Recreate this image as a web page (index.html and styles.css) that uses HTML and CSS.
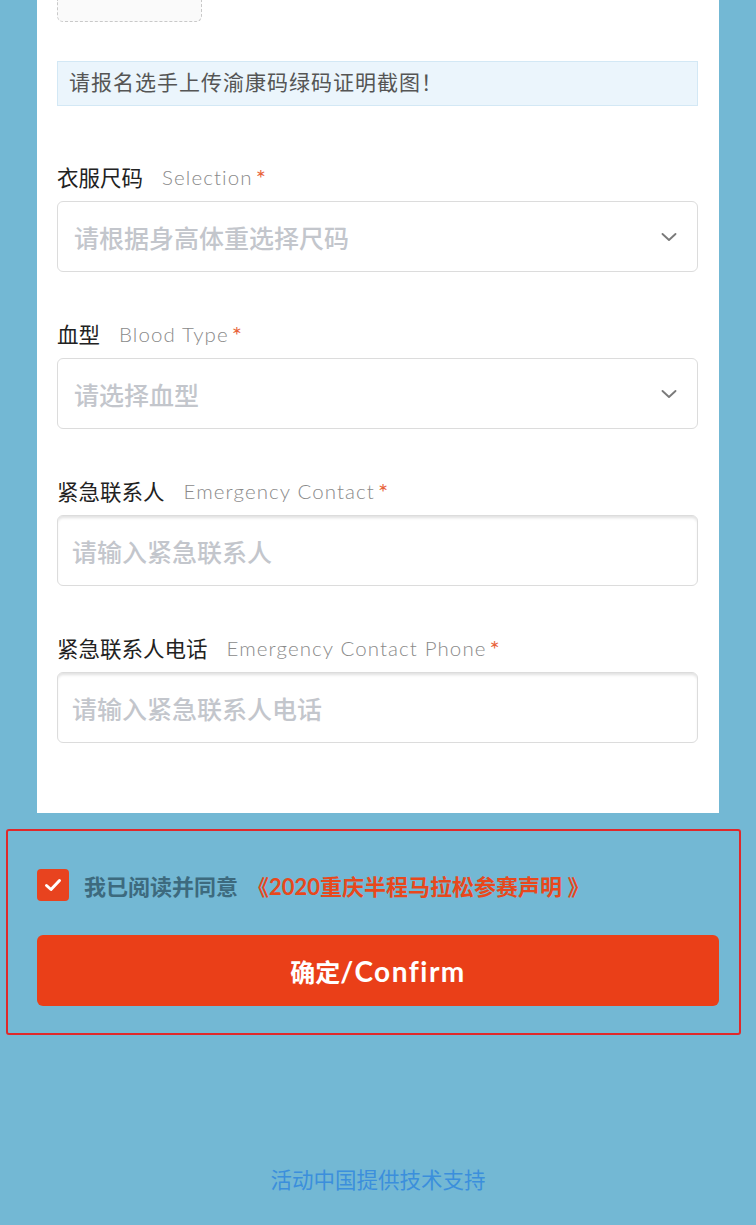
FILE: index.html
```html
<!DOCTYPE html>
<html lang="zh-CN">
<head>
<meta charset="utf-8">
<title>报名</title>
<link rel="stylesheet" href="styles.css">
</head>
<body>
<div class="page">
  <div class="card">
    <div class="upload"></div>
    <div class="notice">请报名选手上传渝康码绿码证明截图！</div>

    <div class="field">
      <div class="label"><span class="zh">衣服尺码</span><span class="en">Selection</span><span class="req">*</span></div>
      <div class="box select"><span class="ph">请根据身高体重选择尺码</span>
        <svg class="chev" width="16" height="10" viewBox="0 0 16 10"><path d="M1.5 2 L8 8 L14.5 2" fill="none" stroke="#7a7a7a" stroke-width="1.9" stroke-linecap="round" stroke-linejoin="round"/></svg>
      </div>
    </div>

    <div class="field">
      <div class="label"><span class="zh">血型</span><span class="en">Blood Type</span><span class="req">*</span></div>
      <div class="box select"><span class="ph">请选择血型</span>
        <svg class="chev" width="16" height="10" viewBox="0 0 16 10"><path d="M1.5 2 L8 8 L14.5 2" fill="none" stroke="#7a7a7a" stroke-width="1.9" stroke-linecap="round" stroke-linejoin="round"/></svg>
      </div>
    </div>

    <div class="field">
      <div class="label"><span class="zh">紧急联系人</span><span class="en">Emergency Contact</span><span class="req">*</span></div>
      <div class="box input"><span class="ph">请输入紧急联系人</span></div>
    </div>

    <div class="field">
      <div class="label"><span class="zh">紧急联系人电话</span><span class="en">Emergency Contact Phone</span><span class="req">*</span></div>
      <div class="box input"><span class="ph">请输入紧急联系人电话</span></div>
    </div>
  </div>

  <div class="agree-box">
    <div class="agree">
      <span class="check"><svg width="18" height="14" viewBox="0 0 18 14"><path d="M2.5 7.5 L7 11.5 L15.5 2.5" fill="none" stroke="#fff" stroke-width="3" stroke-linecap="round" stroke-linejoin="round"/></svg></span>
      <span class="agree-text">我已阅读并同意</span>
      <span class="link">《2020重庆半程马拉松参赛声明 》</span>
    </div>
    <div class="confirm"><span class="confirm-zh">确定</span><span class="confirm-en">/Confirm</span></div>
  </div>

  <div class="footer">活动中国提供技术支持</div>
</div>
</body>
</html>
```

FILE: styles.css
```css
html, body {
  margin: 0;
  padding: 0;
  background: #73b8d4;
}
body {
  font-family: "Lato", "Noto Sans CJK SC", sans-serif;
}
.page {
  width: 756px;
  min-height: 1225px;
  background: #73b8d4;
  overflow: hidden;
}
.card {
  margin: 0 37px;
  background: #fff;
  padding: 0 21px 70px 20px;
}
.upload {
  width: 145px;
  height: 22px;
  box-sizing: border-box;
  border: 1px dashed #c9c9c9;
  border-top: none;
  border-radius: 0 0 6px 6px;
  background: #fafafa;
}
.notice {
  margin-top: 39px;
  height: 45px;
  box-sizing: border-box;
  border: 1px solid #d3e8f5;
  background: #ebf5fc;
  padding-left: 11px;
  line-height: 39px;
  font-size: 21px;
  letter-spacing: 1px;
  color: #555;
  font-family: "Noto Sans CJK SC", sans-serif;
}
.field {
  margin-top: 50px;
}
.notice + .field {
  margin-top: 59px;
}
.label {
  display: flex;
  align-items: center;
  height: 24px;
  line-height: 24px;
}
.zh {
  font-family: "Noto Sans CJK SC", sans-serif;
  font-size: 21.5px;
  color: #222;
}
.en {
  font-family: "Lato", sans-serif;
  font-weight: 300;
  font-size: 20.5px;
  color: #8a8a8a;
  margin-left: 19px;
  letter-spacing: 1.1px;
}
.req {
  color: #e8633a;
  font-size: 24px;
  margin-left: 3px;
  font-family: "Lato", sans-serif;
  line-height: 24px;
  position: relative;
  top: 1px;
}
.box {
  margin-top: 12px;
  height: 71px;
  box-sizing: border-box;
  border: 1.5px solid #dcdcdc;
  border-radius: 6px;
  display: flex;
  align-items: center;
  justify-content: space-between;
  padding: 0 20px 0 16px;
  background: #fff;
}
.input {
  box-shadow: inset 0 3px 3px -1px rgba(0, 0, 0, 0.12);
  padding-left: 14px;
}
.ph {
  font-family: "Noto Sans CJK SC", sans-serif;
  font-size: 25px;
  font-weight: 500;
  color: #c3c6cc;
}
.chev {
  display: block;
}
.agree-box {
  margin: 16px 15px 0 6px;
  border: 2px solid #e0282a;
  border-radius: 3px;
  padding: 38px 20px 27px 29px;
}
.agree {
  display: flex;
  align-items: center;
  height: 32px;
}
.check {
  width: 32px;
  height: 32px;
  border-radius: 4px;
  background: #e8431f;
  display: flex;
  align-items: center;
  justify-content: center;
}
.agree-text {
  margin-left: 15px;
  font-family: "Noto Sans CJK SC", sans-serif;
  font-weight: 700;
  font-size: 22px;
  color: #3d6a7e;
}
.link {
  margin-left: 9px;
  font-family: "Lato", "Noto Sans CJK SC", sans-serif;
  font-weight: 700;
  font-size: 22px;
  color: #e8481c;
}
.confirm {
  margin-top: 34px;
  height: 71px;
  border-radius: 6px;
  background: #ea3f18;
  color: #fff;
  font-weight: 700;
  display: flex;
  align-items: center;
  justify-content: center;
}
.confirm-zh {
  font-family: "Noto Sans CJK SC", sans-serif;
  font-size: 25px;
}
.confirm-en {
  font-family: "Lato", sans-serif;
  font-size: 28px;
  letter-spacing: 1.5px;
}
.footer {
  margin-top: 129px;
  text-align: center;
  line-height: 30px;
  font-family: "Noto Sans CJK SC", sans-serif;
  font-size: 21.5px;
  color: #3b8fdc;
}
```
